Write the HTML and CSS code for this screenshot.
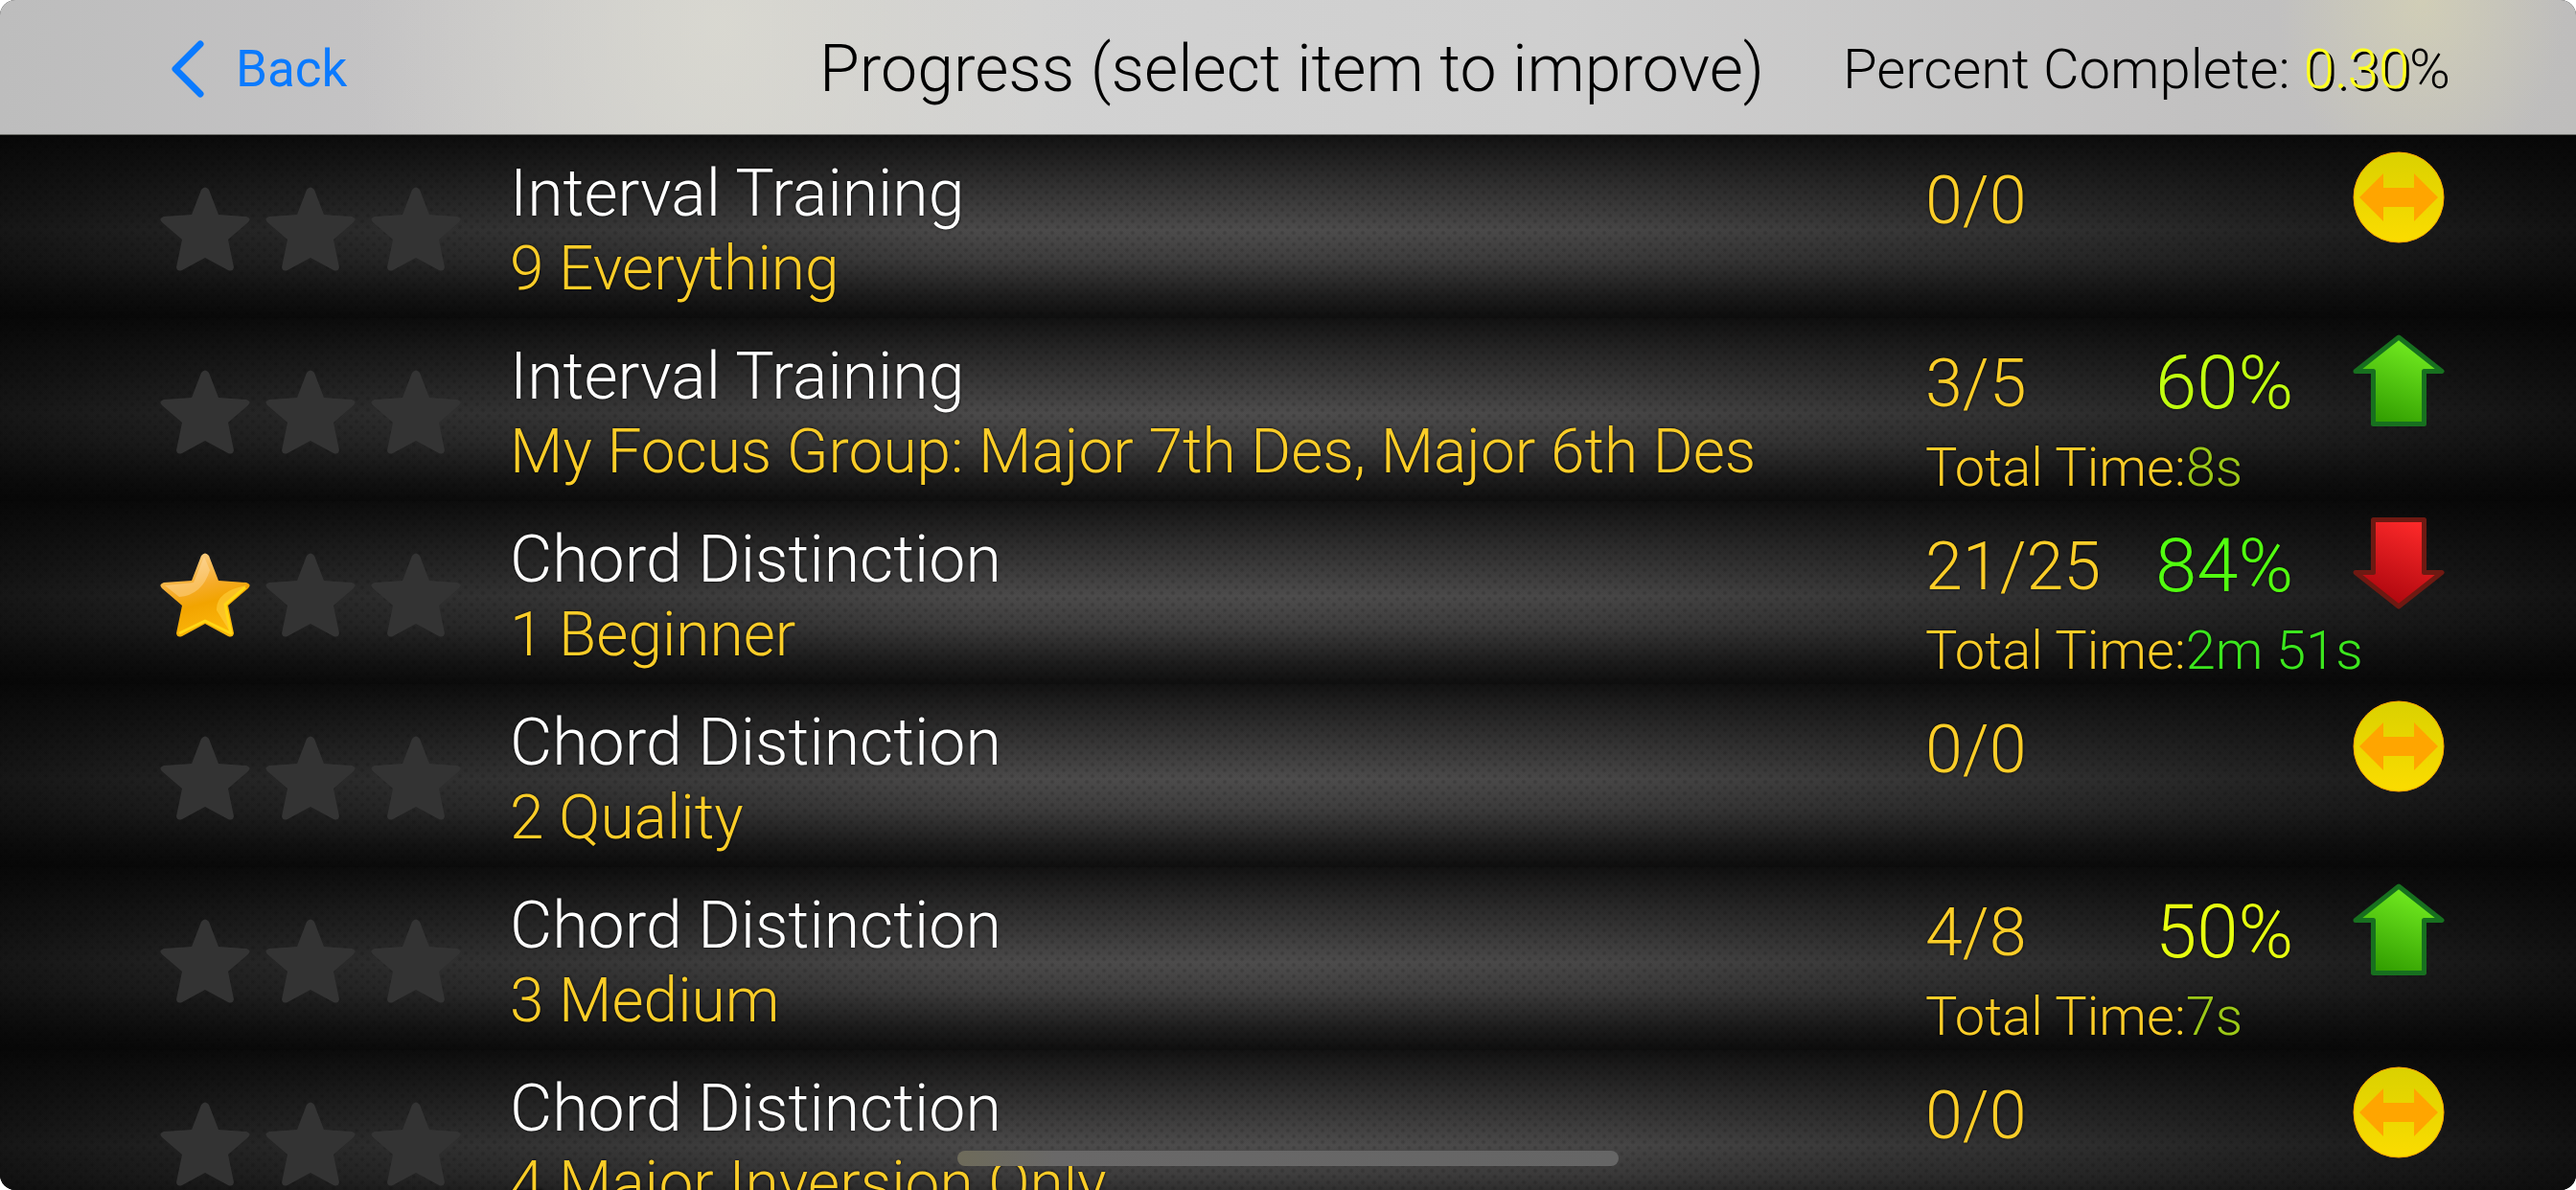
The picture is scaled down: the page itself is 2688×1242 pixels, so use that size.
FILE: index.html
```html
<!DOCTYPE html>
<html lang="en">
<head>
    <meta charset="UTF-8">
    <meta name="viewport" content="width=device-width, initial-scale=1.0">
    <title>Progress</title>
    <link rel="stylesheet" href="styles.css">
</head>
<body>
    <svg class="defs" aria-hidden="true">
        <defs>
            <linearGradient id="gold" x1="0.3" y1="0" x2="0.6" y2="1">
                <stop offset="0" stop-color="#fbd08a"/>
                <stop offset="0.38" stop-color="#f6ac2c"/>
                <stop offset="0.6" stop-color="#f2a400"/>
                <stop offset="1" stop-color="#fdb90c"/>
            </linearGradient>
            <linearGradient id="green" x1="0.7" y1="0" x2="0.3" y2="1">
                <stop offset="0" stop-color="#76f022"/>
                <stop offset="1" stop-color="#309c00"/>
            </linearGradient>
            <linearGradient id="red" x1="0.7" y1="0" x2="0.3" y2="1">
                <stop offset="0" stop-color="#ff2a2a"/>
                <stop offset="1" stop-color="#a8040c"/>
            </linearGradient>
            <linearGradient id="yellow" x1="0" y1="0" x2="0" y2="1">
                <stop offset="0" stop-color="#dad100"/>
                <stop offset="1" stop-color="#fbdc00"/>
            </linearGradient>
        </defs>
        <symbol id="star" viewBox="0 0 94 88">
            <path d="M43 3Q47 -2 51 3L61 29L90 31Q96 33 92 37L71 55L77 84Q76 89 71 87L47 74L23 87Q18 89 17 84L23 55L2 37Q-2 33 4 31L33 29Z"/>
        </symbol>
        <symbol id="star-on" viewBox="0 0 94 88">
            <path fill="url(#gold)" d="M43 3Q47 -2 51 3L61 29L90 31Q96 33 92 37L71 55L77 84Q76 89 71 87L47 74L23 87Q18 89 17 84L23 55L2 37Q-2 33 4 31L33 29Z"/>
            <path fill="#ffe0b0" opacity="0.4" d="M46 4L35 31L5 34L20 46Q44 44 52 18Z"/>
            <path fill="#ffd23c" opacity="0.6" d="M90 34Q58 40 59 60L74 84L68 54Z"/>
            <path fill="none" stroke="#ffd814" stroke-width="3" stroke-linejoin="round" d="M20 84L47 71L74 84L68 54L89 36"/>
        </symbol>
        <symbol id="up" viewBox="0 0 96 96">
            <path fill="url(#green)" stroke="#17701f" stroke-width="5" stroke-linejoin="round" d="M48 3L93 38.500H74.500V93.500H21.500V38.500H3Z"/>
        </symbol>
        <symbol id="down" viewBox="0 0 96 96">
            <path fill="url(#red)" stroke="#6e1912" stroke-width="5" stroke-linejoin="round" d="M48 93L93 57.500H74.500V2.500H21.500V57.500H3Z"/>
        </symbol>
        <symbol id="same" viewBox="0 0 96 96">
            <circle cx="48" cy="48" r="47" fill="url(#yellow)" stroke="#ffa500" stroke-width="1"/>
            <path fill="#ffa500" d="M7 48L32 23V38H64V23L89 48L64 73V58H32V73Z"/>
        </symbol>
    </svg>

    <div class="screen">
        <header class="navbar">
            <button type="button" class="back">
                <svg class="chevron" viewBox="0 0 36 60"><path d="M31 4L5 30L31 56"/></svg>
                Back
            </button>
            <h1 class="title">Progress (select item to improve)</h1>
            <p class="complete">Percent Complete: <span class="complete-value">0.30</span>%</p>
        </header>

        <ul class="list">
            <li>
                <a class="row" href="#">
                    <span class="stars">
                        <svg><use href="#star"/></svg>
                        <svg><use href="#star"/></svg>
                        <svg><use href="#star"/></svg>
                    </span>
                    <span class="name">Interval Training</span>
                    <span class="level">9 Everything</span>
                    <span class="count">0/0</span>
                    <svg class="trend"><use href="#same"/></svg>
                </a>
            </li>
            <li>
                <a class="row" href="#">
                    <span class="stars">
                        <svg><use href="#star"/></svg>
                        <svg><use href="#star"/></svg>
                        <svg><use href="#star"/></svg>
                    </span>
                    <span class="name">Interval Training</span>
                    <span class="level">My Focus Group: Major 7th Des, Major 6th Des</span>
                    <span class="count">3/5</span>
                    <span class="percent lime">60%</span>
                    <svg class="trend"><use href="#up"/></svg>
                    <span class="time">Total Time:<span class="olive">8s</span></span>
                </a>
            </li>
            <li>
                <a class="row" href="#">
                    <span class="stars">
                        <svg><use href="#star-on"/></svg>
                        <svg><use href="#star"/></svg>
                        <svg><use href="#star"/></svg>
                    </span>
                    <span class="name">Chord Distinction</span>
                    <span class="level">1 Beginner</span>
                    <span class="count">21/25</span>
                    <span class="percent green">84%</span>
                    <svg class="trend"><use href="#down"/></svg>
                    <span class="time">Total Time:<span class="leaf">2m 51s</span></span>
                </a>
            </li>
            <li>
                <a class="row" href="#">
                    <span class="stars">
                        <svg><use href="#star"/></svg>
                        <svg><use href="#star"/></svg>
                        <svg><use href="#star"/></svg>
                    </span>
                    <span class="name">Chord Distinction</span>
                    <span class="level">2 Quality</span>
                    <span class="count">0/0</span>
                    <svg class="trend"><use href="#same"/></svg>
                </a>
            </li>
            <li>
                <a class="row" href="#">
                    <span class="stars">
                        <svg><use href="#star"/></svg>
                        <svg><use href="#star"/></svg>
                        <svg><use href="#star"/></svg>
                    </span>
                    <span class="name">Chord Distinction</span>
                    <span class="level">3 Medium</span>
                    <span class="count">4/8</span>
                    <span class="percent yellow">50%</span>
                    <svg class="trend"><use href="#up"/></svg>
                    <span class="time">Total Time:<span class="olive">7s</span></span>
                </a>
            </li>
            <li>
                <a class="row" href="#">
                    <span class="stars">
                        <svg><use href="#star"/></svg>
                        <svg><use href="#star"/></svg>
                        <svg><use href="#star"/></svg>
                    </span>
                    <span class="name">Chord Distinction</span>
                    <span class="level">4 Major Inversion Only</span>
                    <span class="count">0/0</span>
                    <svg class="trend"><use href="#same"/></svg>
                </a>
            </li>
        </ul>

        <div class="home-indicator"></div>
    </div>
</body>
</html>
```
FILE: styles.css
```css
* {
    box-sizing: border-box;
}
body {
    margin: 0;
    background: #fff;
    font-family: Roboto, "Liberation Sans", sans-serif;
    font-weight: 300;
}
.defs {
    position: absolute;
    width: 0;
    height: 0;
}
.screen {
    position: relative;
    display: flex;
    flex-direction: column;
    height: 100vh;
    overflow: hidden;
    border-radius: 16px;
    background: #0a0a0a;
}

/* top bar */
.navbar {
    display: flex;
    flex: none;
    align-items: center;
    height: 141px;
    padding: 4px 131px 0 178px;
    border-bottom: 1px solid #6b6c68;
    background:
        radial-gradient(ellipse 150px 200px at 94% 0, rgba(220, 216, 178, 0.6), transparent),
        radial-gradient(ellipse 380px 500px at 28% 20%, rgba(220, 219, 210, 0.8), transparent),
        linear-gradient(90deg, #bdbdbd, #c4c3c4 15%, #d2d2d2 40%, #cfcfcf 60%, #c2c1c1 85%, #bebdbc);
}
.back {
    display: flex;
    align-items: center;
    gap: 32px;
    padding: 0;
    border: 0;
    background: none;
    color: #0a7aff;
    font: 400 53px Roboto, sans-serif;
}
.chevron {
    width: 36px;
    height: 60px;
    fill: none;
    stroke: #0a7aff;
    stroke-width: 7;
    stroke-linecap: round;
    stroke-linejoin: round;
}
.title {
    flex: 1;
    margin: 0;
    padding-right: 82px;
    color: #000;
    font-size: 68px;
    font-weight: 300;
    text-align: right;
}
.complete {
    margin: 0;
    color: #000;
    font-size: 58px;
}
.complete-value {
    color: #ffff1e;
    text-shadow: 3px 3px 0 #000;
}

/* exercise list */
.list {
    flex: 1;
    margin: 0;
    padding: 0;
    overflow: hidden;
    list-style: none;
}
.row {
    display: grid;
    grid-template-columns: 365px 1fr 240px 206px 96px;
    grid-template-rows: 96px 95px;
    padding: 0 137px 0 167px;
    color: #facd28;
    text-decoration: none;
    text-shadow: 0 0 3px #000;
    white-space: nowrap;
    background:
        radial-gradient(circle, rgba(0, 0, 0, 0.2), transparent 3px) 0 0 / 12px 12px,
        radial-gradient(circle, rgba(0, 0, 0, 0.2), transparent 3px) 6px 6px / 12px 12px,
        linear-gradient(rgba(4, 4, 4, 0.8), rgba(4, 4, 4, 0.45) 22%, rgba(4, 4, 4, 0) 52%, rgba(4, 4, 4, 0.2) 68%, rgba(4, 4, 4, 0.65) 88%, rgba(4, 4, 4, 0.85)),
        linear-gradient(90deg, #161616, #2c2c2c 15%, #4a4949 38%, #4d4c4c 50%, #474646 62%, #2c2c2c 82%, #121212);
}
.stars {
    display: flex;
    grid-row: 1 / 3;
    gap: 16px;
    padding-top: 54px;
}
.stars svg {
    width: 94px;
    height: 88px;
    fill: #333;
}
.name {
    grid-column: 2;
    grid-row: 1;
    padding-top: 21px;
    color: #fff;
    font-size: 68px;
    line-height: 80px;
}
.level {
    grid-column: 2;
    grid-row: 2;
    padding-top: 4px;
    font-size: 64px;
    line-height: 80px;
}
.count {
    grid-column: 3;
    grid-row: 1;
    padding-top: 28px;
    font-size: 70px;
    line-height: 80px;
}
.percent {
    grid-column: 4;
    grid-row: 1;
    padding-top: 28px;
    font-size: 78px;
    line-height: 80px;
}
.trend {
    grid-column: 5;
    grid-row: 1;
    width: 96px;
    height: 96px;
    margin-top: 17px;
}
.time {
    grid-column: 3 / 6;
    grid-row: 2;
    padding-top: 20px;
    font-size: 56px;
    line-height: 80px;
}
.lime {
    color: #c0ff10;
}
.green {
    color: #52ff10;
}
.yellow {
    color: #e6ff10;
}
.olive {
    color: #9cc818;
}
.leaf {
    color: #3ce61e;
}

.home-indicator {
    position: absolute;
    bottom: 25px;
    left: 50%;
    width: 690px;
    height: 16px;
    margin-left: -345px;
    border-radius: 8px;
    background: linear-gradient(90deg, #6e6b5a, #696868 15%, #656565);
}
```
